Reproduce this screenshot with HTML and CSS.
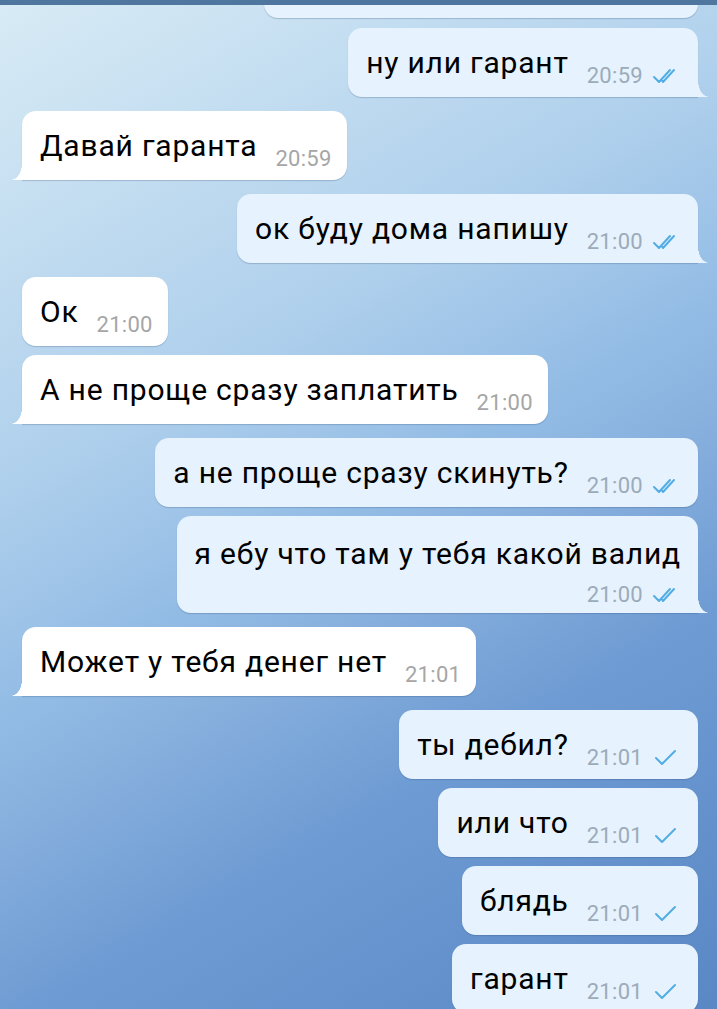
FILE: index.html
```html
<!DOCTYPE html>
<html>
<head>
  <title>Чат</title>
  <link rel="stylesheet" href="styles.css">
</head>
<body>
  <div class="topbar"></div>
  <div class="chat">
    <div class="msg out cut">
      <div class="bubble">
        <span class="meta"><span class="time">20:59</span><svg class="tick" viewBox="0 0 30 20"><path d="M3 11 L8 16 L19 4 M12 16 L23 4 M10 13.5 L12 16"/></svg></span>
      </div>
    </div>

    <div class="msg out cont">
      <div class="bubble tail">
        <span class="text">ну или гарант</span>
        <span class="meta"><span class="time">20:59</span><svg class="tick" viewBox="0 0 30 20"><path d="M3 11 L8 16 L19 4 M12 16 L23 4 M10 13.5 L12 16"/></svg></span>
      </div>
    </div>

    <div class="msg in">
      <div class="bubble tail">
        <span class="text">Давай гаранта</span>
        <span class="meta"><span class="time">20:59</span></span>
      </div>
    </div>

    <div class="msg out">
      <div class="bubble tail">
        <span class="text">ок буду дома напишу</span>
        <span class="meta"><span class="time">21:00</span><svg class="tick" viewBox="0 0 30 20"><path d="M3 11 L8 16 L19 4 M12 16 L23 4 M10 13.5 L12 16"/></svg></span>
      </div>
    </div>

    <div class="msg in">
      <div class="bubble">
        <span class="text">Ок</span>
        <span class="meta"><span class="time">21:00</span></span>
      </div>
    </div>

    <div class="msg in cont">
      <div class="bubble tail">
        <span class="text">А не проще сразу заплатить</span>
        <span class="meta"><span class="time">21:00</span></span>
      </div>
    </div>

    <div class="msg out">
      <div class="bubble">
        <span class="text">а не проще сразу скинуть?</span>
        <span class="meta"><span class="time">21:00</span><svg class="tick" viewBox="0 0 30 20"><path d="M3 11 L8 16 L19 4 M12 16 L23 4 M10 13.5 L12 16"/></svg></span>
      </div>
    </div>

    <div class="msg out cont">
      <div class="bubble tail wrap">
        <span class="text">я ебу что там у тебя какой валид</span>
        <span class="meta"><span class="time">21:00</span><svg class="tick" viewBox="0 0 30 20"><path d="M3 11 L8 16 L19 4 M12 16 L23 4 M10 13.5 L12 16"/></svg></span>
      </div>
    </div>

    <div class="msg in">
      <div class="bubble tail">
        <span class="text">Может у тебя денег нет</span>
        <span class="meta"><span class="time">21:01</span></span>
      </div>
    </div>

    <div class="msg out">
      <div class="bubble">
        <span class="text">ты дебил?</span>
        <span class="meta"><span class="time">21:01</span><svg class="tick" viewBox="0 0 30 20"><path d="M5 10 L11 16 L24 3"/></svg></span>
      </div>
    </div>

    <div class="msg out cont">
      <div class="bubble">
        <span class="text">или что</span>
        <span class="meta"><span class="time">21:01</span><svg class="tick" viewBox="0 0 30 20"><path d="M5 10 L11 16 L24 3"/></svg></span>
      </div>
    </div>

    <div class="msg out cont">
      <div class="bubble">
        <span class="text">блядь</span>
        <span class="meta"><span class="time">21:01</span><svg class="tick" viewBox="0 0 30 20"><path d="M5 10 L11 16 L24 3"/></svg></span>
      </div>
    </div>

    <div class="msg out cont">
      <div class="bubble">
        <span class="text">гарант</span>
        <span class="meta"><span class="time">21:01</span><svg class="tick" viewBox="0 0 30 20"><path d="M5 10 L11 16 L24 3"/></svg></span>
      </div>
    </div>
  </div>
</body>
</html>
```

FILE: styles.css
```css
/* Чат */
html, body {
  margin: 0;
  height: 100%;
  overflow: hidden;
}

body {
  font-family: Roboto, "Liberation Sans", sans-serif;
  background: linear-gradient(150deg, #d8ebf5 0%, #aecfec 35%, #93bce5 50%, #8ab2df 57%, #6e9bd3 72%, #5a88c5 100%);
}

.topbar {
  position: absolute;
  top: 0;
  left: 0;
  right: 0;
  height: 5px;
  background-color: #4e769f;
  z-index: 2;
}

.chat {
  display: flex;
  flex-direction: column;
  padding: 0 19px 0 22px;
}

.msg {
  display: flex;
  margin-top: 14px;
}

.msg.cont {
  margin-top: 9px;
}

.msg.cut + .msg {
  margin-top: 10px;
}

.msg.out {
  justify-content: flex-end;
}

.msg.in {
  justify-content: flex-start;
}

.bubble {
  position: relative;
  display: flex;
  align-items: flex-end;
  box-sizing: border-box;
  min-height: 69px;
  padding: 15px 17px 9px 18px;
  border-radius: 14px;
  box-shadow: 0 1px 1px rgba(40, 70, 110, 0.25);
}

.out .bubble {
  background-color: #e6f2fd;
}

.in .bubble {
  background-color: #ffffff;
  padding-right: 15px;
}

.bubble.wrap {
  min-height: 97px;
  padding-bottom: 6px;
  flex-direction: column;
  align-items: flex-end;
  justify-content: space-between;
}

.text {
  font-size: 30px;
  letter-spacing: 0.8px;
  line-height: 34px;
  padding-top: 3px;
  padding-bottom: 8px;
  color: #000;
}

.wrap .text {
  padding-top: 6px;
  padding-bottom: 0;
}

.meta {
  display: flex;
  align-items: center;
  margin-left: 18px;
  height: 24px;
}

.in .meta {
  margin-left: 18px;
}

.time {
  font-size: 22px;
  letter-spacing: 0.3px;
  line-height: 24px;
}

.out .time {
  color: #9cabb9;
}

.in .time {
  color: #a6a6a6;
}

.tick {
  width: 30px;
  height: 20px;
  margin-left: 8px;
  fill: none;
  stroke: #52ade5;
  stroke-width: 2;
  stroke-linecap: round;
  stroke-linejoin: round;
}

/* хвостики */
.out .bubble.tail {
  border-bottom-right-radius: 0;
}

.in .bubble.tail {
  border-bottom-left-radius: 0;
}

.bubble.tail::after {
  content: "";
  position: absolute;
  bottom: 0;
  width: 11px;
  height: 16px;
}

.out .bubble.tail::after {
  right: -11px;
  background: radial-gradient(ellipse 11px 16px at 100% 0, transparent 97%, #e6f2fd 100%);
}

.in .bubble.tail::after {
  left: -11px;
  background: radial-gradient(ellipse 11px 16px at 0 0, transparent 97%, #ffffff 100%);
}

/* обрезанный сверху */
.msg.cut {
  margin-top: -51px;
}

.cut .bubble {
  width: 434px;
  justify-content: flex-end;
}
```
